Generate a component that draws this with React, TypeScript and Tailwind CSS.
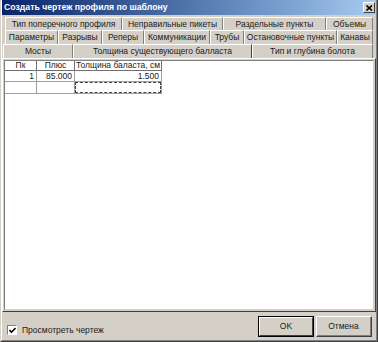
import React from "react";

type Tab = { label: string; w: string; selected?: boolean };

const row1: Tab[] = [
  { label: "Тип поперечного профиля", w: "w-[117px]" },
  { label: "Неправильные пикеты", w: "w-[101px]" },
  { label: "Раздельные пункты", w: "w-[103px]" },
  { label: "Объемы", w: "w-[47px]" },
];
const row2: Tab[] = [
  { label: "Параметры", w: "w-[53px]" },
  { label: "Разрывы", w: "w-[44px]" },
  { label: "Реперы", w: "w-[42px]" },
  { label: "Коммуникации", w: "w-[66px]" },
  { label: "Трубы", w: "w-[34px]" },
  { label: "Остановочные пункты", w: "w-[93px]" },
  { label: "Канавы", w: "w-[36px]" },
];
const row3: Tab[] = [
  { label: "Мосты", w: "w-[70px]" },
  { label: "Толщина существующего балласта", w: "w-[179px]", selected: true },
  { label: "Тип и глубина болота", w: "w-[121px]" },
];

function TabCell({ t, h }: { t: Tab; h: string }) {
  if (t.selected) {
    return (
      <div
        className={`${t.w} ${h} relative z-10 -mb-px flex items-center justify-center border-l border-t border-r border-l-white border-t-white border-r-[#404040] bg-[#d4d0c8] pb-px whitespace-nowrap`}
      >
        {t.label}
      </div>
    );
  }
  return (
    <div
      className={`${t.w} ${h} flex items-center justify-center border-l border-t border-r border-l-white border-t-white border-r-[#808080] whitespace-nowrap`}
    >
      {t.label}
    </div>
  );
}

export default function App() {
  return (
    <div className="w-[378px] h-[342px] bg-[#d4d0c8] font-['Liberation_Sans',Arial,sans-serif] text-[8.5px] leading-none text-[#1a1a1a] flex flex-col border-l border-r border-b border-l-[#d4d0c8] border-r-[#404040] border-b-[#404040] overflow-hidden">
      <div className="flex flex-col flex-1 border-l border-r border-b border-l-white border-r-[#808080] border-b-[#808080]">
        {/* Title bar */}
        <div className="h-[15px] flex items-center justify-between bg-gradient-to-r from-[#0a246a] to-[#a6caf0] pl-[2px] pr-[1px]">
          <span className="text-white font-bold text-[8.7px] whitespace-nowrap">
            Создать чертеж профиля по шаблону
          </span>
          <div className="w-[12px] h-[11px] bg-[#d4d0c8] border border-t-white border-l-white border-r-[#404040] border-b-[#404040] flex items-center justify-center">
            <svg width="7" height="6" viewBox="0 0 7 6">
              <path d="M0.5 0.5 L6 5.5 M6 0.5 L0.5 5.5" stroke="#000" strokeWidth="1.6" />
            </svg>
          </div>
        </div>

        {/* Tabs */}
        <div className="mt-[2px] flex flex-col">
          <div className="flex pl-[3px]">
            {row1.map((t) => (
              <TabCell key={t.label} t={t} h="h-[13px]" />
            ))}
          </div>
          <div className="flex pl-[3px]">
            {row2.map((t) => (
              <TabCell key={t.label} t={t} h="h-[14px]" />
            ))}
          </div>
          <div className="flex pl-[1px]">
            {row3.map((t) => (
              <TabCell key={t.label} t={t} h="h-[14px]" />
            ))}
          </div>
        </div>

        {/* Page */}
        <div className="h-[254px] border-t border-l border-r border-b border-t-white border-l-white border-r-[#404040] border-b-[#404040] p-[1px] flex">
          <div className="flex-1 bg-white border-t border-l border-r border-b border-t-[#808080] border-l-[#808080] border-r-[#d4d0c8] border-b-[#d4d0c8]">
            <div className="grid grid-cols-[32px_38px_87px] w-fit">
              <div className="h-[10px] flex items-center justify-center border-r border-b border-[#707070]">Пк</div>
              <div className="h-[10px] flex items-center justify-center border-r border-b border-[#707070]">Плюс</div>
              <div className="h-[10px] flex items-center justify-center border-r border-b border-[#707070] whitespace-nowrap">
                Толщина баласта, см
              </div>

              <div className="h-[11px] flex items-center justify-end pr-[2px] border-r border-b border-[#a0a0a0]">1</div>
              <div className="h-[11px] flex items-center justify-end pr-[2px] border-r border-b border-[#a0a0a0]">85.000</div>
              <div className="h-[11px] flex items-center justify-end pr-[2px] border-r border-b border-[#a0a0a0]">1.500</div>

              <div className="h-[12px] border-r border-b border-[#a0a0a0]"></div>
              <div className="h-[12px] border-r border-b border-[#a0a0a0]"></div>
              <div className="h-[12px] border-r border-b border-[#a0a0a0]">
                <div className="w-full h-full border border-dashed border-[#404040]"></div>
              </div>
            </div>
          </div>
        </div>

        {/* Bottom bar */}
        <div className="flex-1 flex items-start justify-between pl-[5px] pr-[4px]">
          <div className="flex items-center gap-[5px] mt-[13px]">
            <div className="w-[10px] h-[10px] bg-white border border-t-[#808080] border-l-[#808080] border-r-white border-b-white flex items-center justify-center">
              <svg width="7" height="7" viewBox="0 0 7 7">
                <path d="M0.5 3 L2.5 5.2 L6.5 1" stroke="#000" strokeWidth="1.6" fill="none" />
              </svg>
            </div>
            <span className="whitespace-nowrap">Просмотреть чертеж</span>
          </div>
          <div className="flex gap-[2px] mt-[4px]">
            <div className="w-[56px] h-[21px] border border-black">
              <div className="w-full h-full flex items-center justify-center border border-t-white border-l-white border-r-[#404040] border-b-[#404040]">
                OK
              </div>
            </div>
            <div className="w-[56px] h-[21px] flex items-center justify-center border border-t-white border-l-white border-r-[#404040] border-b-[#404040]">
              <div className="w-full h-full flex items-center justify-center border-r border-b border-r-[#808080] border-b-[#808080]">
                Отмена
              </div>
            </div>
          </div>
        </div>
      </div>
    </div>
  );
}
